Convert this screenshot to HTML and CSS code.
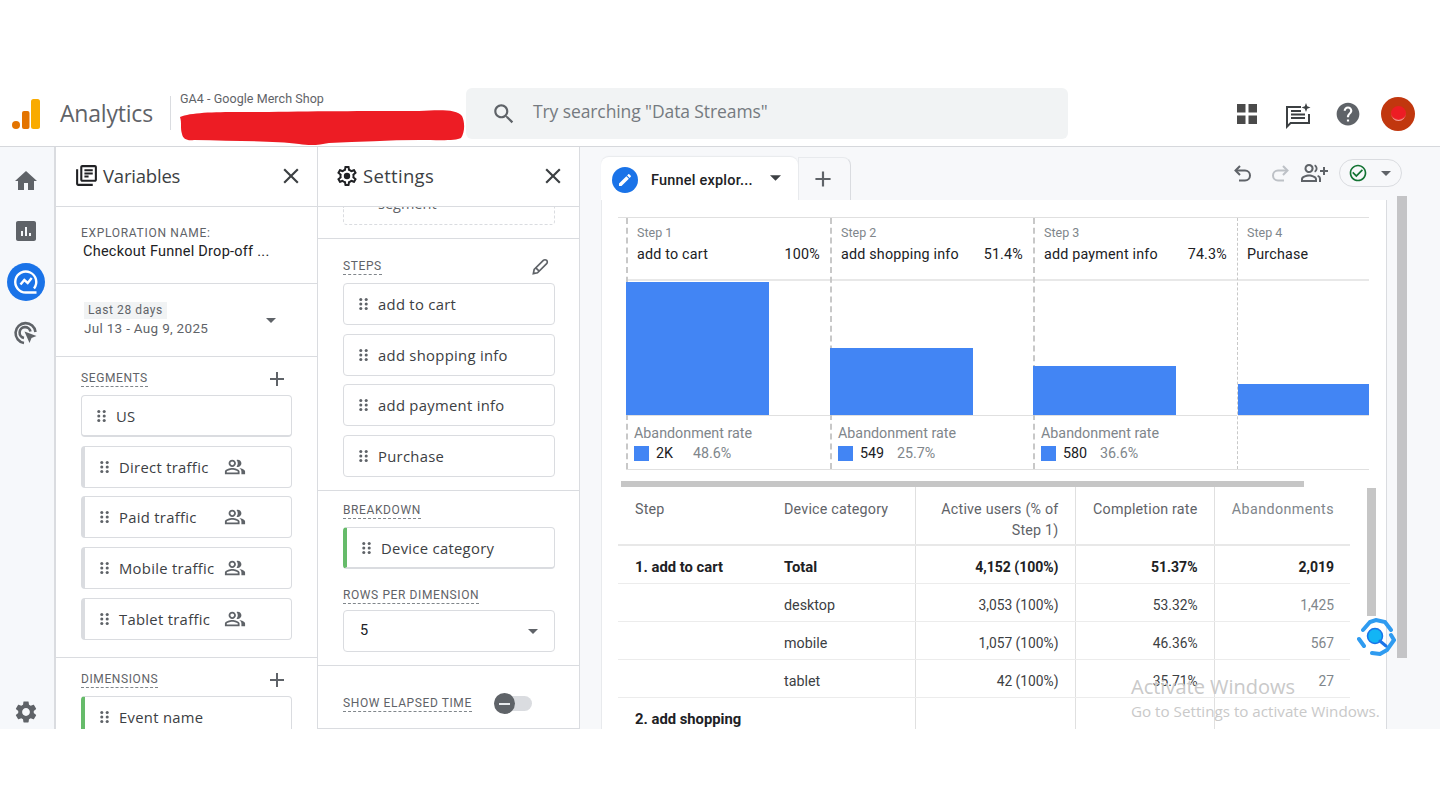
FILE: index.html
```html
<!DOCTYPE html>
<html lang="en">
<head>
<meta charset="utf-8">
<title>Analytics - Funnel exploration</title>
<link rel="stylesheet" href="styles.css">
</head>
<body>
<svg class="defs" width="0" height="0" aria-hidden="true">
  <symbol id="i-grip" viewBox="0 0 10 14"><circle cx="2" cy="2" r="1.7"/><circle cx="8" cy="2" r="1.7"/><circle cx="2" cy="7" r="1.7"/><circle cx="8" cy="7" r="1.7"/><circle cx="2" cy="12" r="1.7"/><circle cx="8" cy="12" r="1.7"/></symbol>
  <symbol id="i-close" viewBox="0 0 24 24"><path d="M19 6.41 17.59 5 12 10.59 6.41 5 5 6.41 10.59 12 5 17.59 6.41 19 12 13.41 17.59 19 19 17.59 13.41 12z"/></symbol>
  <symbol id="i-add" viewBox="0 0 24 24"><path d="M19 13h-6v6h-2v-6H5v-2h6V5h2v6h6v2z"/></symbol>
  <symbol id="i-people" viewBox="0 0 24 24"><path d="M16.67 13.13C18.04 14.06 19 15.32 19 17v3h4v-3c0-2.18-3.57-3.47-6.33-3.87zM15 12c2.21 0 4-1.79 4-4s-1.79-4-4-4c-.47 0-.91.1-1.33.24C14.5 5.27 15 6.58 15 8s-.5 2.73-1.33 3.76c.42.14.86.24 1.33.24zM9 12c2.21 0 4-1.79 4-4s-1.79-4-4-4-4 1.79-4 4 1.79 4 4 4zm0-6c1.1 0 2 .9 2 2s-.9 2-2 2-2-.9-2-2 .9-2 2-2zM9 13c-2.67 0-8 1.34-8 4v3h16v-3c0-2.66-5.33-4-8-4zm6 5H3v-.99C3.2 16.29 6.3 15 9 15s5.8 1.29 6 2v1z"/></symbol>
  <symbol id="i-caret" viewBox="0 0 10 5"><path d="M0 0h10L5 5z"/></symbol>
  <symbol id="i-gear" viewBox="0 0 24 24"><path d="M19.43 12.98c.04-.32.07-.64.07-.98s-.03-.66-.07-.98l2.11-1.65c.19-.15.24-.42.12-.64l-2-3.46c-.12-.22-.39-.3-.61-.22l-2.49 1c-.52-.4-1.08-.73-1.69-.98l-.38-2.65C14.46 2.18 14.25 2 14 2h-4c-.25 0-.46.18-.49.42l-.38 2.65c-.61.25-1.17.59-1.69.98l-2.49-1c-.23-.09-.49 0-.61.22l-2 3.46c-.13.22-.07.49.12.64l2.11 1.65c-.04.32-.07.65-.07.98s.03.66.07.98l-2.11 1.65c-.19.15-.24.42-.12.64l2 3.46c.12.22.39.3.61.22l2.49-1c.52.4 1.08.73 1.69.98l.38 2.65c.03.24.24.42.49.42h4c.25 0 .46-.18.49-.42l.38-2.65c.61-.25 1.17-.59 1.69-.98l2.49 1c.23.09.49 0 .61-.22l2-3.46c.12-.22.07-.49-.12-.64l-2.11-1.65zM17.45 11.27c.04.31.05.52.05.73s-.02.43-.05.73l-.14 1.13.89.7 1.08.84-.7 1.21-1.27-.51-1.04-.42-.9.68c-.43.32-.84.56-1.25.73l-1.06.43-.16 1.13-.2 1.35h-1.4l-.19-1.35-.16-1.13-1.06-.43c-.43-.18-.83-.41-1.23-.71l-.91-.7-1.06.43-1.27.51-.7-1.21 1.08-.84.89-.7-.14-1.13C6.52 12.43 6.5 12.2 6.5 12s.02-.43.05-.72l.14-1.13-.89-.7-1.08-.84.7-1.21 1.27.51 1.04.42.9-.68c.43-.32.84-.56 1.25-.73l1.06-.43.16-1.13.2-1.35h1.39l.19 1.35.16 1.13 1.06.43c.43.18.83.41 1.23.71l.91.7 1.06-.43 1.27-.51.7 1.21-1.07.85-.89.7.14 1.13z"/><circle cx="12" cy="12" r="3.2"/></symbol>
</svg>

<div class="top-gap"></div>
<div class="app">
  <header class="header">
    <div class="logo">
      <svg width="28" height="30" viewBox="0 0 28 30"><circle cx="4" cy="26" r="4" fill="#e37400"/><rect x="10" y="12" width="7.5" height="18" rx="2" fill="#e37400"/><rect x="19" y="0" width="9" height="30" rx="2.5" fill="#f9ab00"/></svg>
      <span class="logo-text">Analytics</span>
    </div>
    <div class="account">
      <div class="account-name">GA4 - Google Merch Shop</div>
    </div>
    <div class="search">
      <svg class="search-icon" width="26" height="26" viewBox="0 0 24 24"><path d="M15.5 14h-.79l-.28-.27C15.41 12.59 16 11.11 16 9.5 16 5.91 13.09 3 9.5 3S3 5.91 3 9.5 5.91 16 9.5 16c1.61 0 3.09-.59 4.23-1.57l.27.28v.79l5 4.99L20.49 19l-4.99-5zm-6 0C7.01 14 5 11.99 5 9.5S7.01 5 9.5 5 14 7.01 14 9.5 11.99 14 9.5 14z"/></svg>
      <span class="search-text">Try searching "Data Streams"</span>
    </div>
    <div class="header-actions">
      <svg class="apps" width="20" height="20" viewBox="0 0 20 20"><rect width="8.5" height="8.5"/><rect x="11.5" width="8.5" height="8.5"/><rect y="11.5" width="8.5" height="8.5"/><rect x="11.5" y="11.5" width="8.5" height="8.5"/></svg>
      <svg class="insights" width="28" height="28" viewBox="0 0 28 28"><path d="M2 4h15v2H4v16.2L6.2 20H24v-8h2v10H7l-5 5z"/><path d="M7 8h10v2H7zM7 11.5h14v2H7zM7 15h14v2H7z"/><path d="M22 1l1.2 3.3L26.500 5.500l-3.300 1.200L22 10l-1.200-3.300L17.500 5.500l3.300-1.200z"/></svg>
      <svg class="help" width="26" height="26" viewBox="0 0 24 24"><path d="M12 1.500C6.200 1.500 1.500 6.200 1.500 12S6.200 22.500 12 22.500 22.500 17.800 22.500 12 17.800 1.500 12 1.500zm1 17.500h-2v-2h2v2zm2.070-7.750l-.9.920C13.450 12.900 13 13.500 13 15h-2v-.5c0-1.100.45-2.100 1.170-2.830l1.240-1.260c.37-.36.59-.86.59-1.410 0-1.100-.9-2-2-2s-2 .9-2 2H8c0-2.210 1.790-4 4-4s4 1.790 4 4c0 .88-.36 1.680-.93 2.250z"/></svg>
      <div class="avatar"><span class="avatar-dot"></span></div>
    </div>
    <svg class="scribble" width="286" height="38" viewBox="0 0 286 38"><path d="M1 7C15 1 50 2 90 2c50-1 110-1 150-1 20-1 38-2 43 5 3 6 3 16-1 22-5 3-22 2-42 2-30 0-60 2-90 3-10 2-18 3-30 1-25-3-65-3-105-4C8 31 4 29 3 24 1 18 3 13 1 7z"/></svg>
  </header>

  <div class="main">
    <nav class="rail">
      <svg class="rail-icon" width="24" height="24" viewBox="0 0 24 24"><path d="M10 21v-7h4v7h6v-9h3L12 2 1 12h3v9z"/></svg>
      <svg class="rail-icon" width="24" height="24" viewBox="0 0 24 24"><path d="M20 2H4c-1.100 0-2 .9-2 2v16c0 1.100.9 2 2 2h16c1.100 0 2-.9 2-2V4c0-1.100-.9-2-2-2zM9 17H7v-5h2v5zm4 0h-2V8h2v9zm4 0h-2v-3h2v3z"/></svg>
      <div class="rail-active">
        <svg width="26" height="26" viewBox="0 0 26 26" fill="none" stroke="#fff" stroke-width="2.400"><path d="M21 19.500A10.500 10.500 0 1 0 13 23.500h10.500"/><path d="M7.500 15.500l3.800-4.500 3.400 3 4-5"/></svg>
      </div>
      <svg class="rail-target" width="26" height="26" viewBox="0 0 26 26" fill="none" stroke="#5f6368" stroke-width="2.600"><path d="M11 23a10 10 0 1 1 11.500-11"/><path d="M11 18a5.500 5.500 0 1 1 6.500-6.500"/><path d="M11.500 11.500l12 4.500-5 2-2 5z" fill="#5f6368" stroke="none"/></svg>
      <svg class="rail-icon rail-gear" width="26" height="26" viewBox="0 0 24 24"><path d="M19.140 12.940c.04-.3.06-.61.06-.94 0-.32-.02-.64-.07-.94l2.030-1.580c.18-.14.23-.41.12-.61l-1.920-3.320c-.12-.22-.37-.29-.59-.22l-2.390.96c-.5-.38-1.030-.7-1.620-.94l-.36-2.540c-.04-.24-.24-.41-.48-.41h-3.840c-.24 0-.43.17-.47.41l-.36 2.540c-.59.24-1.130.57-1.620.94l-2.390-.96c-.22-.08-.47 0-.59.22L2.740 8.870c-.12.21-.08.47.12.61l2.030 1.580c-.05.3-.09.63-.09.94s.02.64.07.94l-2.030 1.580c-.18.14-.23.41-.12.61l1.920 3.320c.12.22.37.29.59.22l2.390-.96c.5.38 1.030.7 1.620.94l.36 2.540c.05.24.24.41.48.41h3.840c.24 0 .44-.17.47-.41l.36-2.540c.59-.24 1.130-.56 1.620-.94l2.390.96c.22.08.47 0 .59-.22l1.920-3.320c.12-.22.07-.47-.12-.61l-2.010-1.580zM12 15.600c-1.980 0-3.600-1.620-3.600-3.600s1.620-3.600 3.600-3.600 3.600 1.620 3.600 3.600-1.620 3.600-3.600 3.600z"/></svg>
    </nav>

    <aside class="panel panel-vars">
      <div class="panel-head">
        <svg class="head-icon" width="25" height="25" viewBox="0 0 24 24"><path d="M4 6H2v14c0 1.100.9 2 2 2h14v-2H4V6zm16-4H8c-1.100 0-2 .9-2 2v12c0 1.100.9 2 2 2h12c1.100 0 2-.9 2-2V4c0-1.100-.9-2-2-2zm0 14H8V4h12v12zM10 9h8v2h-8zm0 3h4v2h-4zm0-6h8v2h-8z"/></svg>
        <span class="panel-title">Variables</span>
        <svg class="close"><use href="#i-close"/></svg>
      </div>
      <section class="sec sec-name">
        <div class="name-label">EXPLORATION NAME:</div>
        <div class="name-value">Checkout Funnel Drop-off ...</div>
      </section>
      <section class="sec sec-date">
        <div>
          <div class="date-chip">Last 28 days</div>
          <div class="date-range">Jul 13 - Aug 9, 2025</div>
        </div>
        <svg class="caret date-caret"><use href="#i-caret"/></svg>
      </section>
      <section class="sec sec-list">
        <div class="sec-head"><span class="label">SEGMENTS</span><svg class="plus"><use href="#i-add"/></svg></div>
        <div class="card-list">
          <div class="card card-raised card-us"><svg class="grip"><use href="#i-grip"/></svg>US</div>
          <div class="card card-seg"><svg class="grip"><use href="#i-grip"/></svg><span class="card-name">Direct traffic</span><svg class="people"><use href="#i-people"/></svg></div>
          <div class="card card-seg"><svg class="grip"><use href="#i-grip"/></svg><span class="card-name">Paid traffic</span><svg class="people"><use href="#i-people"/></svg></div>
          <div class="card card-seg"><svg class="grip"><use href="#i-grip"/></svg><span class="card-name">Mobile traffic</span><svg class="people"><use href="#i-people"/></svg></div>
          <div class="card card-seg"><svg class="grip"><use href="#i-grip"/></svg><span class="card-name">Tablet traffic</span><svg class="people"><use href="#i-people"/></svg></div>
        </div>
      </section>
      <section class="sec sec-dims">
        <div class="sec-head"><span class="label">DIMENSIONS</span><svg class="plus"><use href="#i-add"/></svg></div>
        <div class="card-list">
          <div class="card card-dim"><svg class="grip"><use href="#i-grip"/></svg>Event name</div>
        </div>
      </section>
    </aside>

    <aside class="panel panel-settings">
      <div class="panel-head panel-head-settings">
        <svg class="head-icon" width="24" height="24" viewBox="0 0 24 24"><use href="#i-gear"/></svg>
        <span class="panel-title">Settings</span>
        <svg class="close"><use href="#i-close"/></svg>
      </div>
      <section class="sec sec-clip">
        <div class="dashed-box"><span class="dashed-text">segment</span></div>
      </section>
      <section class="sec sec-steps">
        <div class="sec-head"><span class="label">STEPS</span>
          <svg class="pencil" width="20" height="20" viewBox="0 0 24 24" fill="none" stroke="#5f6368" stroke-width="2"><path d="M4 20l1-5L16 4c1-1 3-1 4 0s1 3 0 4L9 19z"/><path d="M7 13l4 4"/></svg>
        </div>
        <div class="card-list">
          <div class="card"><svg class="grip"><use href="#i-grip"/></svg>add to cart</div>
          <div class="card"><svg class="grip"><use href="#i-grip"/></svg>add shopping info</div>
          <div class="card"><svg class="grip"><use href="#i-grip"/></svg>add payment info</div>
          <div class="card"><svg class="grip"><use href="#i-grip"/></svg>Purchase</div>
        </div>
      </section>
      <section class="sec sec-break">
        <div class="sec-head sec-head-tight"><span class="label">BREAKDOWN</span></div>
        <div class="card card-raised card-dim"><svg class="grip"><use href="#i-grip"/></svg>Device category</div>
        <div class="sec-head sec-head-rows"><span class="label">ROWS PER DIMENSION</span></div>
        <div class="select"><span>5</span><svg class="caret"><use href="#i-caret"/></svg></div>
      </section>
      <section class="sec sec-toggle">
        <span class="label">SHOW ELAPSED TIME</span>
        <span class="toggle"><span class="toggle-knob"></span></span>
      </section>
    </aside>

    <main class="canvas">
      <div class="tabbar">
        <div class="tab">
          <span class="tab-badge"><svg width="16" height="16" viewBox="0 0 24 24"><path d="M3 17.250V21h3.750L17.810 9.940l-3.750-3.750L3 17.250zM20.710 7.040c.39-.39.39-1.020 0-1.410l-2.340-2.340c-.39-.39-1.020-.39-1.410 0l-1.830 1.830 3.750 3.750 1.830-1.830z"/></svg></span>
          <span class="tab-name">Funnel explor...</span>
          <svg class="tab-caret"><use href="#i-caret"/></svg>
        </div>
        <div class="tab-add"><svg class="tab-plus"><use href="#i-add"/></svg></div>
        <div class="tools">
          <svg class="tool" width="22" height="22" viewBox="0 0 22 22" fill="none" stroke="#5f6368" stroke-width="2"><path d="M8 4L3.500 8.500 8 13"/><path d="M4 8.500h9a5 5 0 0 1 0 10H7"/></svg>
          <svg class="tool tool-off" width="22" height="22" viewBox="0 0 22 22" fill="none" stroke="#bdc1c6" stroke-width="2"><path d="M14 4l4.500 4.500L14 13"/><path d="M18 8.500H9a5 5 0 0 0 0 10h6"/></svg>
          <svg class="tool-share" width="28" height="24" viewBox="0 0 28 24" fill="#5f6368"><path d="M9 12c2.600 0 4.600-2 4.600-4.600S11.600 3 9 3 4.500 5 4.500 7.400 6.500 12 9 12zm0-7c1.300 0 2.500 1.100 2.500 2.400S10.300 10 9 10 6.500 8.700 6.500 7.400 7.700 5 9 5zM9 13.500c-3 0-8 1.500-8 4.500v3h16v-3c0-3-5-4.500-8-4.500zM15 19H3v-1c.4-1.300 3.400-2.500 6-2.500s5.600 1.200 6 2.500v1z"/><path d="M15 3.500c1.700 1 2.500 2.400 2.500 4s-.8 3-2.500 4l-.8-1.500c1-.7 1.500-1.500 1.500-2.500S15.200 5.700 14.200 5zM18 14c2 .8 3 2 3 4v3h-2v-3c0-1-.5-1.800-1.800-2.400zM23 6h2v3h3v2h-3v3h-2v-3h-3V9h3z"/></svg>
          <div class="status-pill">
            <svg width="20" height="20" viewBox="0 0 24 24" fill="#137333"><path d="M16.590 7.580 10 14.170l-3.590-3.580L5 12l5 5 8-8zM12 2C6.480 2 2 6.480 2 12s4.480 10 10 10 10-4.480 10-10S17.520 2 12 2zm0 18c-4.420 0-8-3.580-8-8s3.580-8 8-8 8 3.580 8 8-3.580 8-8 8z"/></svg>
            <svg class="pill-caret"><use href="#i-caret"/></svg>
          </div>
        </div>
      </div>

      <div class="report">
        <div class="chart-top"></div>
        <div class="funnel">
          <div class="step">
            <div class="step-head"><div class="step-no">Step 1</div><div class="step-row"><span>add to cart</span><span>100%</span></div></div>
            <div class="step-plot"><div class="bar bar-1"></div></div>
            <div class="step-foot"><div class="foot-title">Abandonment rate</div><div class="foot-row"><i class="swatch"></i><b class="foot-num">2K</b><span class="foot-pct">48.6%</span></div></div>
          </div>
          <div class="step">
            <div class="step-head"><div class="step-no">Step 2</div><div class="step-row"><span>add shopping info</span><span>51.4%</span></div></div>
            <div class="step-plot"><div class="bar bar-2"></div></div>
            <div class="step-foot"><div class="foot-title">Abandonment rate</div><div class="foot-row"><i class="swatch"></i><b class="foot-num">549</b><span class="foot-pct">25.7%</span></div></div>
          </div>
          <div class="step">
            <div class="step-head"><div class="step-no">Step 3</div><div class="step-row"><span>add payment info</span><span>74.3%</span></div></div>
            <div class="step-plot"><div class="bar bar-3"></div></div>
            <div class="step-foot"><div class="foot-title">Abandonment rate</div><div class="foot-row"><i class="swatch"></i><b class="foot-num">580</b><span class="foot-pct">36.6%</span></div></div>
          </div>
          <div class="step step-last">
            <div class="step-head"><div class="step-no">Step 4</div><div class="step-row"><span>Purchase</span></div></div>
            <div class="step-plot"><div class="bar bar-4"></div></div>
            <div class="step-foot"></div>
          </div>
        </div>
        <div class="hscroll"></div>
        <table class="data">
          <colgroup><col class="c1"><col class="c2"><col class="c3"><col class="c4"><col class="c5"></colgroup>
          <thead>
            <tr><th class="left">Step</th><th class="left nobar">Device category</th><th>Active users (% of Step 1)</th><th>Completion rate</th><th>Abandonments</th></tr>
          </thead>
          <tbody>
            <tr class="total"><td class="left">1. add to cart</td><td class="left nobar">Total</td><td>4,152 (100%)</td><td>51.37%</td><td>2,019</td></tr>
            <tr><td class="left"></td><td class="left nobar">desktop</td><td>3,053 (100%)</td><td>53.32%</td><td class="muted">1,425</td></tr>
            <tr><td class="left"></td><td class="left nobar">mobile</td><td>1,057 (100%)</td><td>46.36%</td><td class="muted">567</td></tr>
            <tr><td class="left"></td><td class="left nobar">tablet</td><td>42 (100%)</td><td>35.71%</td><td class="muted">27</td></tr>
            <tr class="total"><td class="left">2. add shopping</td><td class="left nobar"></td><td></td><td></td><td></td></tr>
          </tbody>
        </table>
        <div class="vscroll"></div>
      </div>
      <div class="canvas-scroll"></div>
    </main>
  </div>

  <svg class="float-icon" width="40" height="38" viewBox="0 0 40 38" fill="none">
    <path d="M7 12l7-8 6-2 9 2 6 8M35 17l3 5-7 10-7 4-8-1M8 28l-5-7" stroke="#2f9bf0" stroke-width="4" stroke-linecap="round"/>
    <circle cx="19" cy="18" r="7.500" fill="#12b5f5" stroke="#1a73e8" stroke-width="1.500"/>
    <path d="M24 23l6 5" stroke="#1a73e8" stroke-width="3" stroke-linecap="round"/>
  </svg>
  <div class="activate">
    <div class="activate-title">Activate Windows</div>
    <div class="activate-sub">Go to Settings to activate Windows.</div>
  </div>
</div>
</body>
</html>
```

FILE: styles.css
```css
* { box-sizing: border-box; }
html, body { margin: 0; padding: 0; background: #fff; }
body { width: 1440px; height: 810px; overflow: hidden; font-family: Roboto, "Liberation Sans", sans-serif; color: #3c4043; }
.defs { position: absolute; }
.top-gap { height: 82px; }

.app { position: relative; height: 647px; overflow: hidden; display: flex; flex-direction: column; }

/* Header */
.header { position: relative; flex: none; height: 65px; display: flex; align-items: flex-start; border-bottom: 1px solid #d6d8dc; background: #fff; }
.logo { width: 171px; height: 34px; margin-top: 14px; display: flex; align-items: center; padding-left: 12px; border-right: 1px solid #dadce0; }
.logo svg { margin-top: 2px; }
.logo-text { margin-left: 20px; font: 400 23px/30px "Open Sans", sans-serif; letter-spacing: -.2px; color: #5f6368; }
.account { width: 295px; padding: 9px 0 0 9px; }
.account-name { font: 400 12.500px/16px Roboto, sans-serif; letter-spacing: .06px; color: #5f6368; }
.search { width: 602px; height: 51px; margin-top: 6px; background: #f1f3f4; border-radius: 6px; display: flex; align-items: center; padding-left: 25px; font: 400 17.500px/24px "Open Sans", sans-serif; letter-spacing: -.1px; color: #757a80; }
.search-text { margin: -5px 0 0 1px; }
.search-icon { fill: #5f6368; margin-right: 15px; }
.header-actions { flex: 1; display: flex; align-items: center; height: 51px; margin-top: 6px; padding-left: 169px; }
.apps { fill: #4a4a4a; margin-right: 27px; }
.insights { fill: #3c4043; margin-right: 23px; margin-top: 4px; }
.help { fill: #5f6368; margin-right: 20px; }
.avatar { width: 34px; height: 34px; border-radius: 50%; background: #c1370e; display: flex; align-items: center; justify-content: center; }
.avatar-dot { width: 15px; height: 15px; border-radius: 50%; background: #ed1c24; box-shadow: inset 0 -2px 1px -1px #f3b6a8; }
.scribble { position: absolute; left: 179px; top: 28px; fill: #ed1c24; }

/* Main */
.main { flex: 1; min-height: 0; display: flex; background: #f7f8fa; }
.rail { flex: none; width: 56px; border-right: 2px solid #dadce0; background: #f6f8fb; display: flex; flex-direction: column; align-items: center; padding: 22px 2px 4px 0; }
.rail-icon { fill: #5f6368; flex: none; }
.rail-icon + .rail-icon { margin-top: 26px; }
.rail-active { flex: none; width: 38px; height: 38px; margin-top: 20px; border-radius: 50%; background: #1a73e8; display: flex; align-items: center; justify-content: center; }
.rail-target { flex: none; margin-top: 19px; }
.rail-icon.rail-gear { margin-top: auto; }

/* Panels */
.panel { flex: none; width: 262px; background: #fff; border-right: 1px solid #dadce0; overflow: hidden; }
.panel-head { height: 60px; display: flex; align-items: center; padding: 0 13px 2px 18px; border-bottom: 1px solid #dadce0; }
.panel-head-settings { padding-left: 17px; }
.head-icon { fill: #202124; flex: none; margin-right: 4px; }
.panel-title { flex: 1; font: 400 18.500px/24px "Open Sans", sans-serif; letter-spacing: -.2px; color: #3c4043; }
.panel-head-settings .panel-title { letter-spacing: .3px; }
.close { width: 26px; height: 26px; fill: #3c4043; flex: none; }
.sec { border-bottom: 1px solid #dadce0; padding: 0 25px; }
.panel-settings .sec { padding-right: 24px; }

.sec-name { height: 77px; padding-top: 18px; }
.name-label { font: 400 12px/16px Roboto, sans-serif; letter-spacing: .7px; color: #5f6368; }
.name-value { margin-top: 1px; padding-left: 2px; font: 400 14.500px/20px Roboto, sans-serif; letter-spacing: .25px; color: #202124; }

.sec-date { height: 73px; display: flex; align-items: flex-start; justify-content: space-between; padding: 18px 41px 0 28px; }
.date-chip { display: block; width: fit-content; padding: 0 4px; height: 17px; background: #f1f3f4; font: 400 12px/17px Roboto, sans-serif; letter-spacing: .6px; color: #5f6368; }
.date-range { font: 400 13.500px/20px Roboto, sans-serif; letter-spacing: .3px; color: #5f6368; margin-top: -1px; }
.caret { width: 10px; height: 5px; fill: #5f6368; flex: none; }
.date-caret { margin-top: 16px; }

.sec-list { height: 301px; padding-top: 12px; }
.sec-dims { padding-top: 12px; }
.sec-head { height: 19px; display: flex; align-items: center; justify-content: space-between; margin-bottom: 7px; }
.label { font: 400 12px/15px Roboto, sans-serif; letter-spacing: .6px; color: #5f6368; border-bottom: 1px dashed #80868b; }
.plus { width: 24px; height: 24px; fill: #5f6368; margin-right: 3px; }
.card-list { display: flex; flex-direction: column; gap: 8.700px; }
.card { height: 42px; display: flex; align-items: center; padding-left: 15px; background: #fff; border: 1px solid #dadce0; border-radius: 4px; font: 400 14.800px/20px "Open Sans", sans-serif; letter-spacing: .3px; color: #3c4043; }
.card-raised { border-bottom-width: 2px; }
.card-seg { border-left: 4px solid #dadce0; padding-left: 15px; }
.card-dim { border-left: 4px solid #66bb6a; padding-left: 15px; }
.grip { width: 9px; height: 14px; fill: #5f6368; flex: none; margin-right: 10px; }
.card-name { width: 105px; flex: none; white-space: nowrap; }
.people { width: 22px; height: 22px; fill: #5f6368; flex: none; }

/* Settings sections */
.sec-clip { height: 32px; position: relative; overflow: hidden; }
.dashed-box { height: 18px; border: 1px dashed #dadce0; border-top: 0; border-radius: 0 0 4px 4px; position: relative; }
.dashed-text { position: absolute; left: 34px; top: -13px; font: 400 14.500px/20px "Open Sans", sans-serif; color: #5f6368; }
.sec-steps { height: 252px; padding-top: 18px; }
.sec-steps .sec-head { margin-bottom: 7px; }
.pencil { margin-right: 5px; }
.sec-break { height: 175px; padding-top: 10px; }
.sec-head-tight { margin-bottom: 7px; }
.sec-head-rows { margin: 17px 0 5px; }
.select { height: 42px; border: 1px solid #dadce0; border-radius: 4px; display: flex; align-items: center; justify-content: space-between; padding: 0 16px; font: 400 14.500px/20px Roboto, sans-serif; color: #202124; }
.sec-toggle { display: flex; align-items: center; gap: 22px; padding-top: 13px; height: 63px; }
.toggle { position: relative; display: block; width: 38px; height: 15px; border-radius: 8px; background: #dadce0; }
.toggle-knob { position: absolute; left: 0; top: -3px; width: 21px; height: 21px; border-radius: 50%; background: #5f6368; }
.toggle-knob::after { content: ""; position: absolute; left: 5px; top: 9.500px; width: 11px; height: 2px; background: #e8eaed; }

/* Canvas */
.canvas { position: relative; flex: 1; min-width: 0; padding-left: 21px; }
.tabbar { height: 53px; padding-top: 10px; display: flex; align-items: stretch; }
.tab { position: relative; z-index: 1; width: 197px; display: flex; align-items: center; padding: 0 0 0 11px; background: #fff; border-radius: 8px 8px 0 0; box-shadow: 0 -1px 1px #e8eaed; }
.tab-badge { flex: none; width: 26px; height: 26px; border-radius: 50%; background: #1a73e8; display: flex; align-items: center; justify-content: center; fill: #fff; margin: 2px 13px 0 0; }
.tab-name { width: 119px; flex: none; font: 500 14.500px/20px Roboto, sans-serif; letter-spacing: .2px; color: #202124; margin-top: 4px; }
.tab-caret { width: 11px; height: 6px; fill: #3c4043; flex: none; margin-top: -2px; }
.tab-add { width: 53px; padding-right: 3px; background: #f7f8fa; border-radius: 0 8px 0 0; border-right: 1px solid #dadce0; border-top: 1px solid #e8eaed; border-left: 1px solid #e8eaed; display: flex; align-items: center; justify-content: center; }
.tab-plus { width: 26px; height: 26px; fill: #5f6368; }
.tools { position: absolute; top: 12px; right: 38px; display: flex; align-items: center; }
.tool { margin-right: 15px; }
.tool-off { margin-right: 9px; }
.tool-share { margin-right: 11px; }
.status-pill { width: 63px; height: 28px; border: 1px solid #dadce0; border-radius: 14px; display: flex; align-items: center; padding-left: 8px; gap: 13px; }
.pill-caret { width: 10px; height: 5px; fill: #5f6368; }

.report { position: relative; width: 786px; height: 529px; padding: 17px 17px 0 16px; background: #fff; border-left: 1px solid #e8eaed; border-right: 1px solid #dadce0; }
.chart-top { height: 1px; background: #e0e0e0; }
.funnel { display: grid; grid-template-columns: 204px 203px 204px 132px; margin-left: 8px; border-bottom: 1px solid #e0e0e0; }
.step { border-left: 2px dashed #c8c8c8; }
.step-last { border-left-width: 1px; }
.step-head { height: 63px; border-bottom: 2px solid #e8e8e8; padding: 7px 10px 0 9px; }
.step-no { font: 400 12.500px/16px Roboto, sans-serif; color: #80868b; }
.step-row { display: flex; justify-content: space-between; margin-top: 3px; font: 400 14.300px/20px Roboto, sans-serif; letter-spacing: .2px; color: #202124; }
.step-plot { height: 135px; display: flex; align-items: flex-end; border-bottom: 1px solid #e0e0e0; }
.bar { width: 143px; margin-left: -2px; background: #4285f4; }
.bar-1 { height: 133px; }
.bar-2 { height: 67px; }
.bar-3 { height: 49px; }
.bar-4 { width: 100%; margin-left: 0; height: 31px; }
.step-foot { height: 53px; padding: 7px 0 0 6px; }
.foot-title { font: 400 14.300px/20px Roboto, sans-serif; color: #80868b; }
.foot-row { display: flex; align-items: center; height: 20px; font-size: 14.300px; }
.swatch { display: block; width: 15px; height: 15px; background: #4285f4; margin-right: 7px; flex: none; }
.foot-num { font-weight: 400; color: #202124; width: 37px; }
.foot-pct { color: #80868b; }

.hscroll { width: 683px; height: 6px; margin: 11px 0 0 3px; background: #c6c6c6; }
.data { width: 732px; table-layout: fixed; border-collapse: collapse; font-size: 13.800px; color: #3c4043; }
.c1 { width: 149px; } .c2 { width: 148px; } .c3 { width: 160px; } .c4 { width: 139px; } .c5 { width: 136px; }
.data th, .data td { padding: 0 16px 0 17px; text-align: right; border-left: 1px solid #e0e0e0; border-bottom: 1px solid #ececec; font-weight: 400; }
.data th { height: 58px; vertical-align: top; padding-top: 12px; font-size: 14.300px; line-height: 21px; letter-spacing: .2px; color: #5f6368; border-bottom: 2px solid #e8e8e8; }
.data td { height: 38px; padding-top: 6px; }
.data th.left, .data td.left { text-align: left; border-left: 0; font-size: 14.300px; }
.data th:last-child { color: #80868b; letter-spacing: .42px; }
.data .total td { font-weight: 700; font-size: 14px; color: #202124; }
.data .total td.left { font-size: 14.800px; }
.data td.muted { color: #80868b; }
.vscroll { position: absolute; left: 765px; top: 288px; width: 9px; height: 128px; background: #c6c6c6; }
.canvas-scroll { position: absolute; left: 817px; top: 49px; width: 10px; height: 462px; background: #c4c4c6; }

/* Overlays */
.float-icon { position: absolute; left: 1356px; top: 536px; }
.activate { position: absolute; left: 1131px; top: 592px; color: #c9c9c9; font-family: "Open Sans", sans-serif; white-space: nowrap; }
.activate-title { font-size: 20px; line-height: 26px; }
.activate-sub { font-size: 15.200px; line-height: 20px; margin-top: 1px; }
```
